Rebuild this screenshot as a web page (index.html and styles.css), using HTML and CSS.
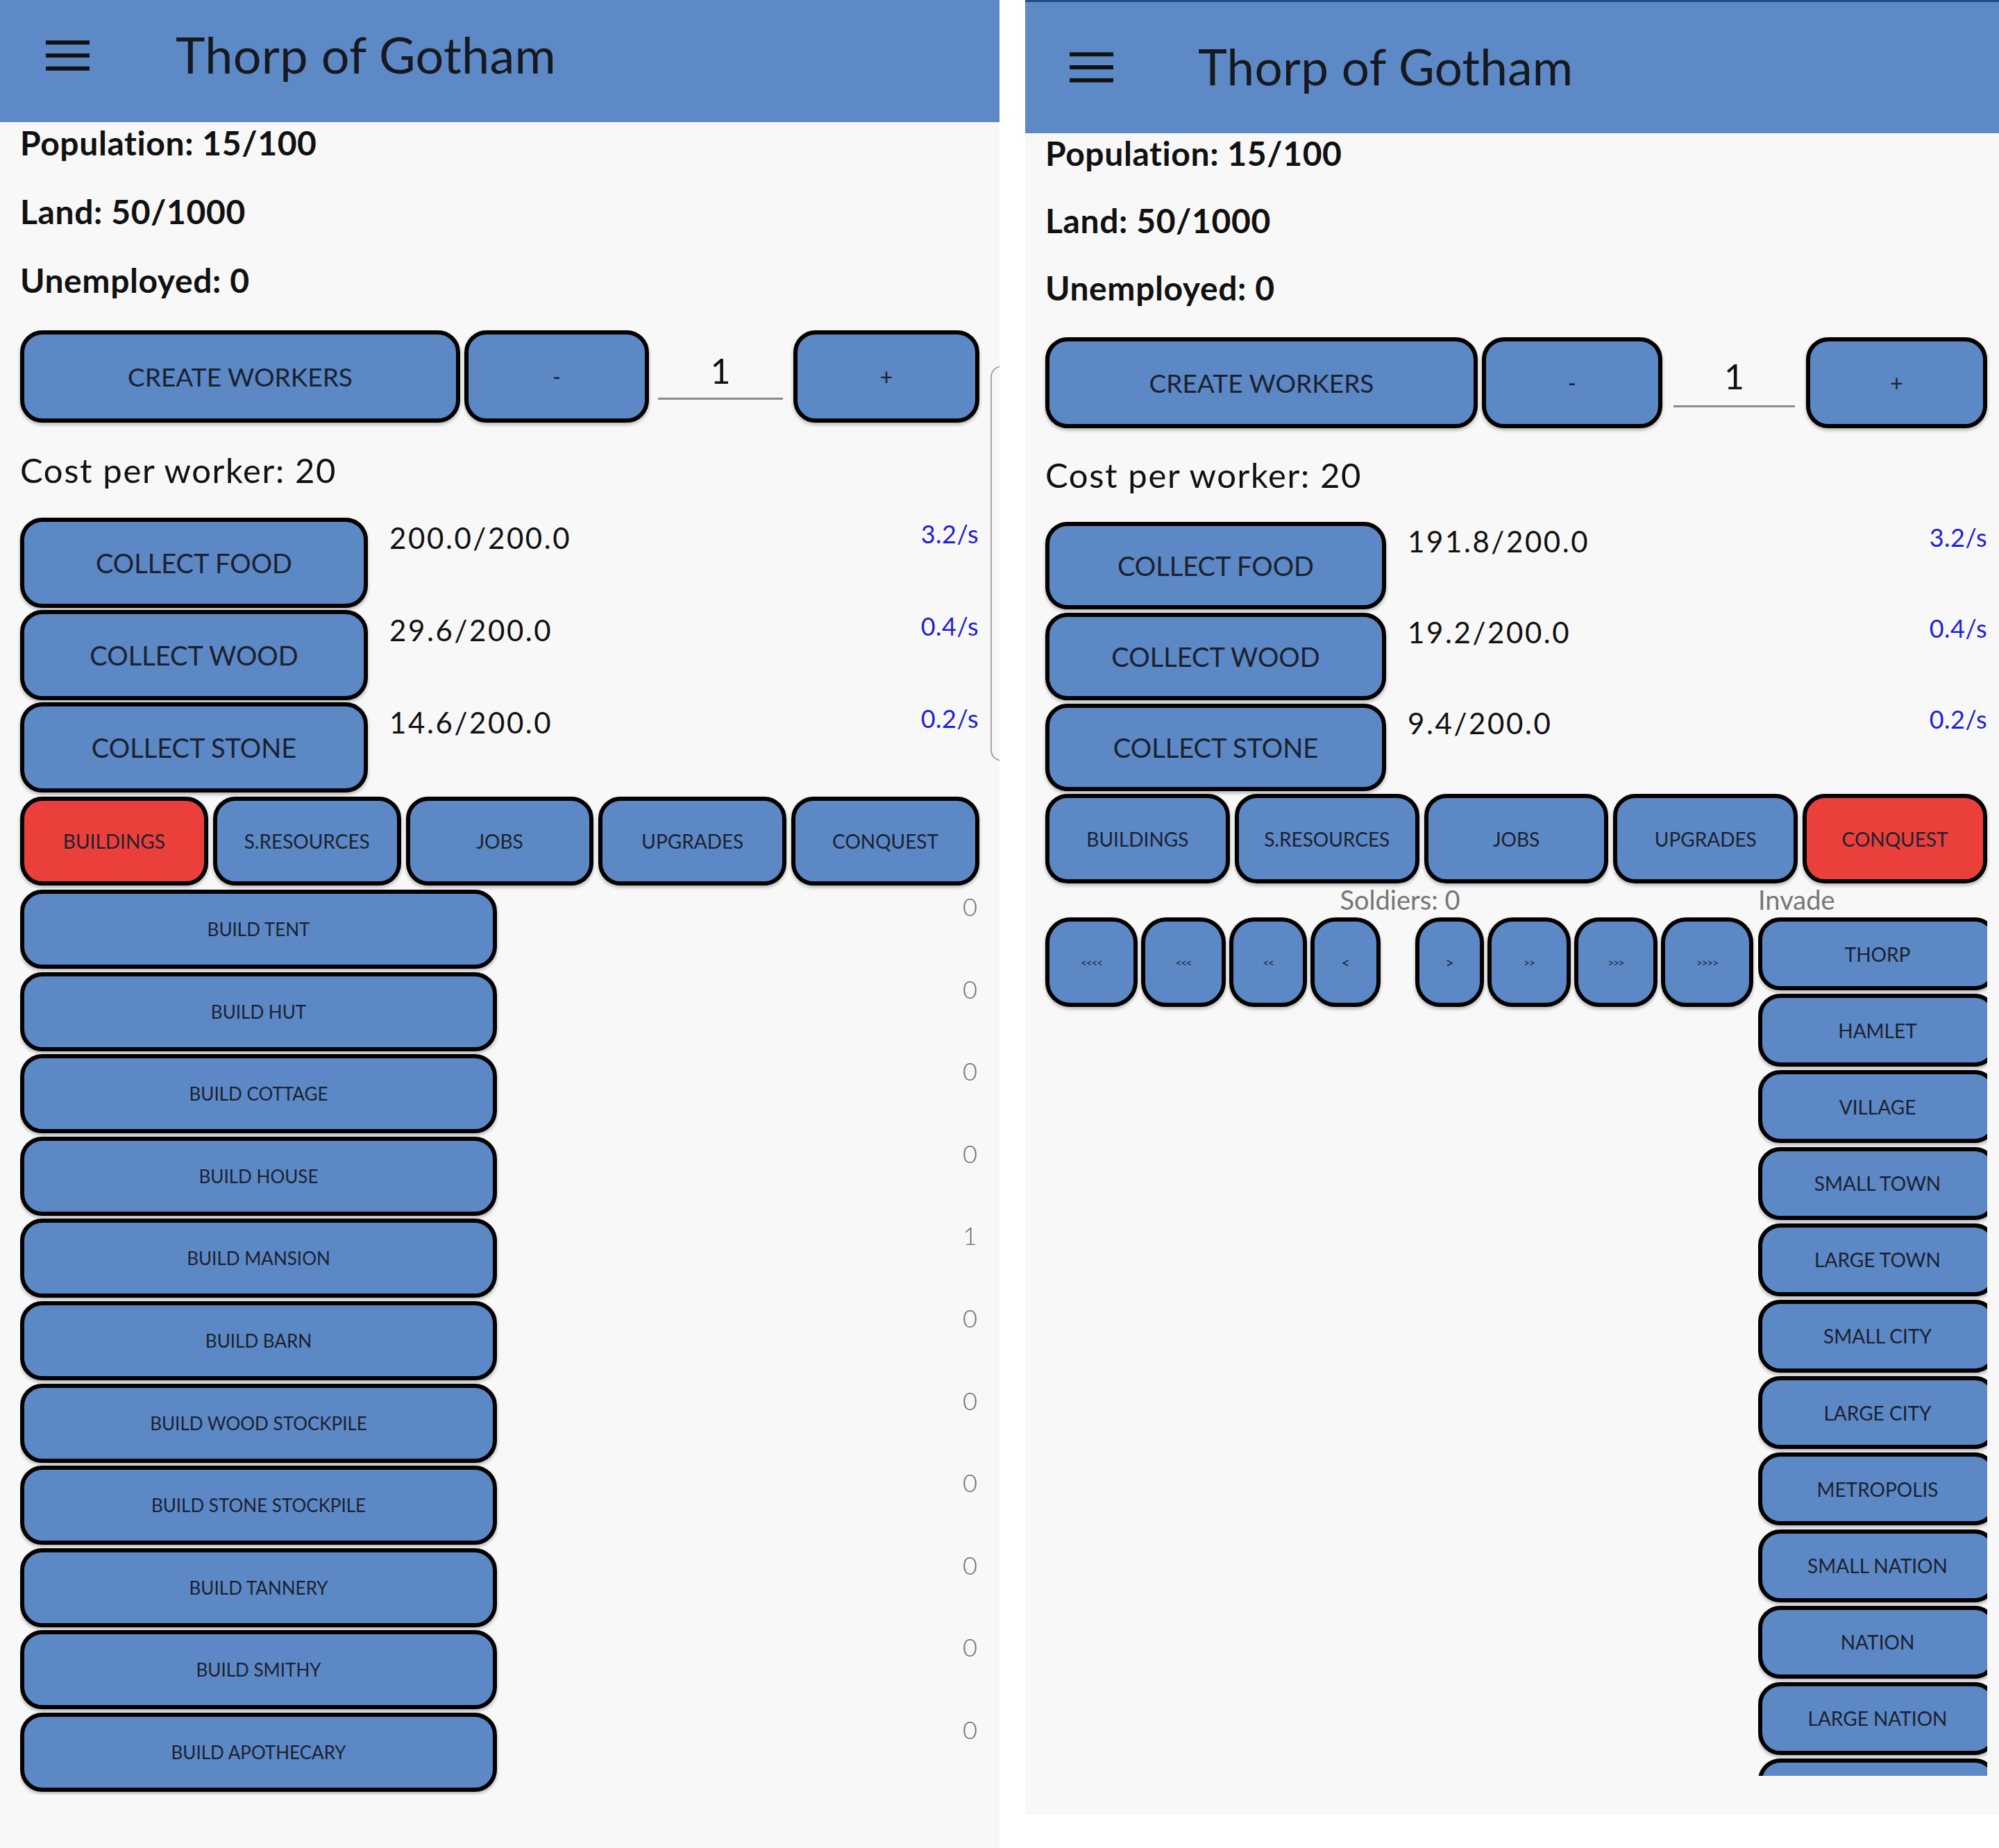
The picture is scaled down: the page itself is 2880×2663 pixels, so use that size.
FILE: index.html
```html
<!DOCTYPE html>
<html lang="en">
<head>
<meta charset="utf-8">
<title>Thorp of Gotham</title>
<link rel="stylesheet" href="styles.css">
</head>
<body>
<div class="screens">

  <section class="phone phone--left">
    <header class="appbar">
      <svg class="menu-icon" viewBox="0 0 64 44" aria-hidden="true"><rect x="0" y="0" width="64" height="6"/><rect x="0" y="19" width="64" height="6"/><rect x="0" y="38" width="64" height="6"/></svg>
      <h1 class="appbar-title">Thorp of Gotham</h1>
    </header>
    <main class="content">
      <p class="stat">Population: 15/100</p>
      <p class="stat">Land: 50/1000</p>
      <p class="stat">Unemployed: 0</p>
      <div class="workers-row">
        <button class="btn btn--create">CREATE WORKERS</button>
        <button class="btn btn--step btn--minus">-</button>
        <div class="qty"><span>1</span></div>
        <button class="btn btn--step btn--plus">+</button>
      </div>
      <p class="cost">Cost per worker: 20</p>
      <div class="resources">
        <div class="res-row"><button class="btn btn--collect">COLLECT FOOD</button><span class="res-amount">200.0/200.0</span><span class="res-rate">3.2/s</span></div>
        <div class="res-row"><button class="btn btn--collect">COLLECT WOOD</button><span class="res-amount">29.6/200.0</span><span class="res-rate">0.4/s</span></div>
        <div class="res-row"><button class="btn btn--collect">COLLECT STONE</button><span class="res-amount">14.6/200.0</span><span class="res-rate">0.2/s</span></div>
      </div>
      <nav class="tabs">
        <button class="btn tab tab--active">BUILDINGS</button>
        <button class="btn tab">S.RESOURCES</button>
        <button class="btn tab">JOBS</button>
        <button class="btn tab">UPGRADES</button>
        <button class="btn tab">CONQUEST</button>
      </nav>
      <div class="build-list">
        <div class="build-row"><button class="btn btn--build">BUILD TENT</button><span class="build-count">0</span></div>
        <div class="build-row"><button class="btn btn--build">BUILD HUT</button><span class="build-count">0</span></div>
        <div class="build-row"><button class="btn btn--build">BUILD COTTAGE</button><span class="build-count">0</span></div>
        <div class="build-row"><button class="btn btn--build">BUILD HOUSE</button><span class="build-count">0</span></div>
        <div class="build-row"><button class="btn btn--build">BUILD MANSION</button><span class="build-count">1</span></div>
        <div class="build-row"><button class="btn btn--build">BUILD BARN</button><span class="build-count">0</span></div>
        <div class="build-row"><button class="btn btn--build">BUILD WOOD STOCKPILE</button><span class="build-count">0</span></div>
        <div class="build-row"><button class="btn btn--build">BUILD STONE STOCKPILE</button><span class="build-count">0</span></div>
        <div class="build-row"><button class="btn btn--build">BUILD TANNERY</button><span class="build-count">0</span></div>
        <div class="build-row"><button class="btn btn--build">BUILD SMITHY</button><span class="build-count">0</span></div>
        <div class="build-row"><button class="btn btn--build">BUILD APOTHECARY</button><span class="build-count">0</span></div>
      </div>
    </main>
    <div class="edge-bracket"></div>
  </section>

  <section class="phone phone--right">
    <header class="appbar">
      <svg class="menu-icon" viewBox="0 0 64 44" aria-hidden="true"><rect x="0" y="0" width="64" height="6"/><rect x="0" y="19" width="64" height="6"/><rect x="0" y="38" width="64" height="6"/></svg>
      <h1 class="appbar-title">Thorp of Gotham</h1>
    </header>
    <main class="content">
      <p class="stat">Population: 15/100</p>
      <p class="stat">Land: 50/1000</p>
      <p class="stat">Unemployed: 0</p>
      <div class="workers-row">
        <button class="btn btn--create">CREATE WORKERS</button>
        <button class="btn btn--step btn--minus">-</button>
        <div class="qty"><span>1</span></div>
        <button class="btn btn--step btn--plus">+</button>
      </div>
      <p class="cost">Cost per worker: 20</p>
      <div class="resources">
        <div class="res-row"><button class="btn btn--collect">COLLECT FOOD</button><span class="res-amount">191.8/200.0</span><span class="res-rate">3.2/s</span></div>
        <div class="res-row"><button class="btn btn--collect">COLLECT WOOD</button><span class="res-amount">19.2/200.0</span><span class="res-rate">0.4/s</span></div>
        <div class="res-row"><button class="btn btn--collect">COLLECT STONE</button><span class="res-amount">9.4/200.0</span><span class="res-rate">0.2/s</span></div>
      </div>
      <nav class="tabs">
        <button class="btn tab">BUILDINGS</button>
        <button class="btn tab">S.RESOURCES</button>
        <button class="btn tab">JOBS</button>
        <button class="btn tab">UPGRADES</button>
        <button class="btn tab tab--active">CONQUEST</button>
      </nav>
      <div class="conquest">
        <div class="conquest-head conquest-head--soldiers">Soldiers: 0</div>
        <div class="conquest-head conquest-head--invade">Invade</div>
        <div class="arrows">
          <button class="btn arrow arrow--w133">&lt;&lt;&lt;&lt;</button>
          <button class="btn arrow arrow--w122">&lt;&lt;&lt;</button>
          <button class="btn arrow arrow--w112">&lt;&lt;</button>
          <button class="btn arrow arrow--w101 arrow--single">&lt;</button>
          <button class="btn arrow arrow--w99 arrow--single arrow--after-gap">&gt;</button>
          <button class="btn arrow arrow--w120">&gt;&gt;</button>
          <button class="btn arrow arrow--w120">&gt;&gt;&gt;</button>
          <button class="btn arrow arrow--w133">&gt;&gt;&gt;&gt;</button>
        </div>
        <div class="city-list">
          <button class="btn city">THORP</button>
          <button class="btn city">HAMLET</button>
          <button class="btn city">VILLAGE</button>
          <button class="btn city">SMALL TOWN</button>
          <button class="btn city">LARGE TOWN</button>
          <button class="btn city">SMALL CITY</button>
          <button class="btn city">LARGE CITY</button>
          <button class="btn city">METROPOLIS</button>
          <button class="btn city">SMALL NATION</button>
          <button class="btn city">NATION</button>
          <button class="btn city">LARGE NATION</button>
          <button class="btn city" aria-label="more"></button>
        </div>
      </div>
    </main>
  </section>

</div>
</body>
</html>
```

FILE: styles.css
```css
* { box-sizing: border-box; }

html, body {
  margin: 0;
  padding: 0;
  background: #ffffff;
}

body {
  width: 2880px;
  height: 2663px;
  overflow: hidden;
  font-family: "Lato", "Noto Sans", sans-serif;
  color: #111111;
}

.screens {
  display: flex;
  align-items: flex-start;
  gap: 37px;
}

.phone {
  position: relative;
  overflow: hidden;
  display: flex;
  flex-direction: column;
  background: #f8f8f8;
}

.phone--left { width: 1440px; height: 2663px; }
.phone--right { width: 1403px; height: 2615px; }

/* ---------- app bar ---------- */
.appbar {
  display: flex;
  align-items: center;
  background: #5d89c6;
  flex: none;
}

.phone--left .appbar { height: 176px; padding-left: 66px; padding-bottom: 16px; }
.phone--right .appbar { height: 192px; padding-left: 64px; border-top: 3px solid #1f4d8a; padding-bottom: 2px; }

.menu-icon {
  width: 63px;
  height: 44px;
  fill: #111111;
  flex: none;
}

.appbar-title {
  margin: 0;
  font-weight: 400;
  font-size: 72px;
  color: #16191f;
  letter-spacing: 0.3px;
}

.phone--left .appbar-title { margin-left: 124px; margin-bottom: 4px; }
.phone--right .appbar-title { margin-left: 122px; font-size: 71px; margin-bottom: 2px; }

/* ---------- content ---------- */
.content {
  position: relative;
  flex: 1;
  display: flex;
  flex-direction: column;
}

.phone--left .content { padding: 1px 29px 0 29px; }
.phone--right .content { padding: 0 17px 0 29px; }

.stat {
  margin: 0;
  font-size: 48px;
  line-height: 58px;
  font-weight: 700;
  letter-spacing: 0.6px;
}
.phone--left .stat { margin-bottom: 41px; }
.phone--left .stat:nth-of-type(3) { margin-bottom: 43px; }
.phone--right .stat { margin-bottom: 39px; }
.phone--right .stat:nth-of-type(3) { margin-bottom: 42px; }

/* ---------- generic button ---------- */
.btn {
  display: flex;
  align-items: center;
  justify-content: center;
  margin: 0;
  padding: 0;
  background: #5c88c5;
  border: 6px solid #000000;
  border-radius: 32px;
  box-shadow: 0 3px 5px rgba(0, 0, 0, 0.28);
  font-family: "Lato", "Noto Sans", sans-serif;
  color: #1b2130;
  font-weight: 400;
  white-space: nowrap;
}

/* ---------- create workers row ---------- */
.workers-row {
  display: flex;
  align-items: flex-start;
}
.phone--left .workers-row { height: 133px; }
.phone--right .workers-row { height: 131px; }

.workers-row .btn { height: 100%; flex: none; }

.btn--create { font-size: 37px; }
.btn--step { font-size: 32px; }

.phone--left .btn--create { width: 634px; }
.phone--left .btn--minus { width: 266px; margin-left: 6px; }
.phone--left .qty { width: 180px; margin-left: 13px; height: 100px; padding-bottom: 14px; }
.phone--left .btn--plus { width: 268px; margin-left: 15px; }

.phone--right .btn--create { width: 623px; }
.phone--right .btn--minus { width: 260px; margin-left: 6px; }
.phone--right .qty { width: 175px; margin-left: 16px; height: 101px; padding-bottom: 17px; }
.phone--right .btn--plus { width: 261px; margin-left: 16px; }

.qty {
  display: flex;
  align-items: flex-end;
  justify-content: center;
  flex: none;
  border-bottom: 3px solid #8a8a8a;
  font-size: 50px;
  line-height: 50px;
  color: #111111;
}

/* ---------- cost ---------- */
.cost {
  margin: 0;
  font-size: 49px;
  line-height: 58px;
  font-weight: 400;
  letter-spacing: 1.6px;
}
.phone--left .cost { margin: 39px 0 40px; }
.phone--right .cost { margin: 38px 0 39px; }

/* ---------- resources ---------- */
.resources {
  display: flex;
  flex-direction: column;
}
.phone--left .resources { gap: 3px; }
.phone--right .resources { gap: 5px; }

.res-row {
  display: flex;
  align-items: flex-start;
}
.phone--left .res-row { height: 130px; }
.phone--right .res-row { height: 126px; }

.btn--collect {
  height: 100%;
  font-size: 38px;
  flex: none;
}
.phone--left .btn--collect { width: 501px; }
.phone--right .btn--collect { width: 491px; }

.res-amount {
  margin-left: 31px;
  font-size: 42px;
  line-height: 50px;
  letter-spacing: 2.6px;
  color: #111111;
}
.phone--left .res-amount { margin-top: 4px; }
.phone--right .res-amount { margin-top: 3px; }

.res-rate {
  margin-left: auto;
  font-size: 36px;
  line-height: 44px;
  letter-spacing: 0.5px;
  color: #1e22d6;
}
.phone--left .res-rate { margin-top: 1px; margin-right: 1px; }
.phone--right .res-rate { margin-top: 0; }

/* ---------- tabs ---------- */
.tabs {
  display: grid;
  grid-template-columns: repeat(5, 1fr);
  column-gap: 7px;
}
.phone--left .tabs { margin-top: 6px; height: 128px; }
.phone--right .tabs { margin-top: 4px; height: 129px; }

.tab { font-size: 28px; }
.tab--active { background: #ea3f3b; }

/* ---------- building list ---------- */
.build-list {
  display: flex;
  flex-direction: column;
  gap: 4.6px;
  margin-top: 6px;
  height: 1304px;
  overflow: hidden;
  flex: none;
}

.build-row {
  display: flex;
  align-items: flex-start;
  height: 114px;
  flex: none;
}

.btn--build {
  width: 687px;
  height: 100%;
  font-size: 26px;
  flex: none;
}

.build-count {
  margin-left: auto;
  margin-right: 3px;
  margin-top: 4px;
  font-size: 36px;
  line-height: 40px;
  color: #6f6f6f;
  font-weight: 300;
}

.edge-bracket {
  position: absolute;
  left: 1427px;
  top: 527px;
  width: 60px;
  height: 570px;
  border: 2px solid #a3a3a3;
  border-radius: 16px;
}

/* ---------- conquest ---------- */
.conquest {
  display: grid;
  grid-template-columns: 1022px 330px;
  column-gap: 5px;
}

.conquest-head {
  font-size: 38px;
  line-height: 46px;
  color: #767676;
  margin-bottom: 3px;
  white-space: nowrap;
}
.conquest-head--soldiers { text-align: center; }
.conquest-head--invade { text-align: left; }

.arrows {
  display: flex;
  gap: 5px;
  align-items: flex-start;
}

.arrow {
  height: 129px;
  flex: none;
  font-size: 15px;
  letter-spacing: -1px;
  border-radius: 36px;
  color: #1b2438;
}
.arrow--single { font-size: 21px; letter-spacing: 0; }
.arrow--after-gap { margin-left: 45px; }
.arrow--w133 { width: 133px; }
.arrow--w122 { width: 122px; }
.arrow--w120 { width: 120px; }
.arrow--w112 { width: 112px; }
.arrow--w101 { width: 101px; }
.arrow--w99 { width: 99px; }

.city-list {
  display: flex;
  flex-direction: column;
  gap: 5.2px;
  height: 1237px;
  overflow: hidden;
}

.city {
  height: 105px;
  width: 344px;
  flex: none;
  font-size: 28px;
}
```
